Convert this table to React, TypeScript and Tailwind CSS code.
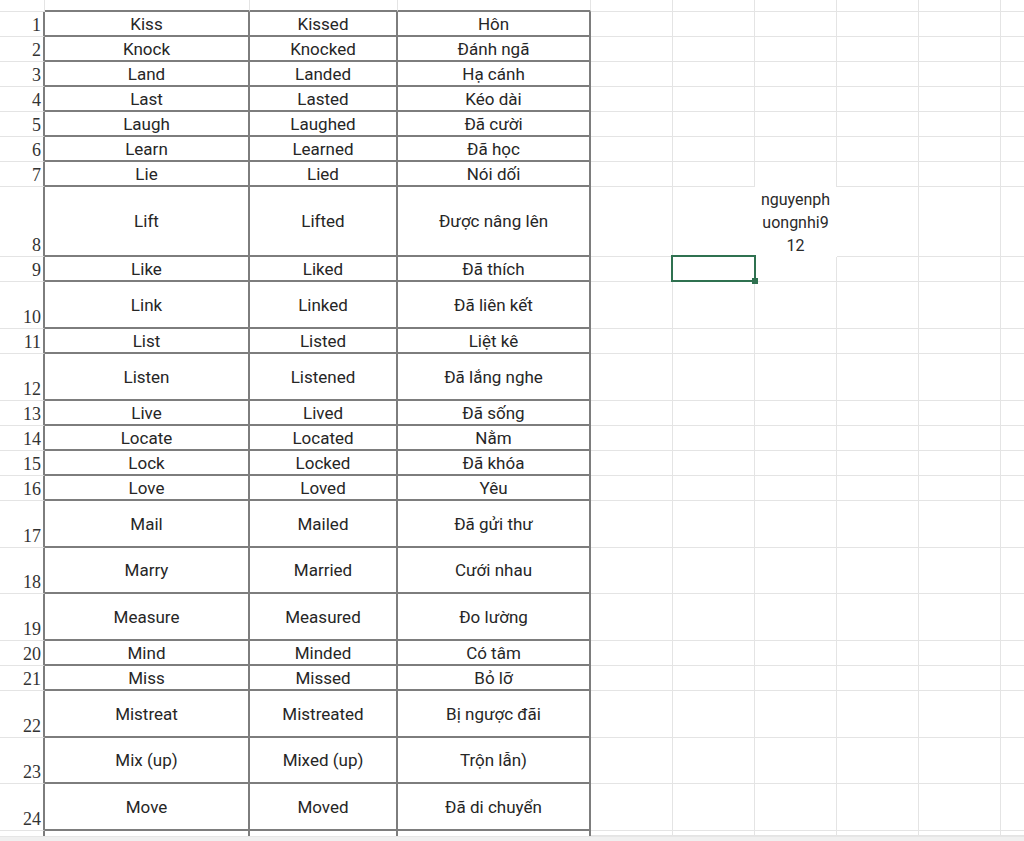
import React from "react";

type Row = { n: number; a: string; b: string; c: string; h: number };

const rows: Row[] = [
  { n: 1, a: "Kiss", b: "Kissed", c: "Hôn", h: 25 },
  { n: 2, a: "Knock", b: "Knocked", c: "Đánh ngã", h: 25 },
  { n: 3, a: "Land", b: "Landed", c: "Hạ cánh", h: 25 },
  { n: 4, a: "Last", b: "Lasted", c: "Kéo dài", h: 25 },
  { n: 5, a: "Laugh", b: "Laughed", c: "Đã cười", h: 25 },
  { n: 6, a: "Learn", b: "Learned", c: "Đã học", h: 25 },
  { n: 7, a: "Lie", b: "Lied", c: "Nói dối", h: 25 },
  { n: 8, a: "Lift", b: "Lifted", c: "Được nâng lên", h: 70 },
  { n: 9, a: "Like", b: "Liked", c: "Đã thích", h: 25 },
  { n: 10, a: "Link", b: "Linked", c: "Đã liên kết", h: 47 },
  { n: 11, a: "List", b: "Listed", c: "Liệt kê", h: 25 },
  { n: 12, a: "Listen", b: "Listened", c: "Đã lắng nghe", h: 47 },
  { n: 13, a: "Live", b: "Lived", c: "Đã sống", h: 25 },
  { n: 14, a: "Locate", b: "Located", c: "Nằm", h: 25 },
  { n: 15, a: "Lock", b: "Locked", c: "Đã khóa", h: 25 },
  { n: 16, a: "Love", b: "Loved", c: "Yêu", h: 25 },
  { n: 17, a: "Mail", b: "Mailed", c: "Đã gửi thư", h: 47 },
  { n: 18, a: "Marry", b: "Married", c: "Cưới nhau", h: 46 },
  { n: 19, a: "Measure", b: "Measured", c: "Đo lường", h: 47 },
  { n: 20, a: "Mind", b: "Minded", c: "Có tâm", h: 25 },
  { n: 21, a: "Miss", b: "Missed", c: "Bỏ lỡ", h: 25 },
  { n: 22, a: "Mistreat", b: "Mistreated", c: "Bị ngược đãi", h: 47 },
  { n: 23, a: "Mix (up)", b: "Mixed (up)", c: "Trộn lẫn)", h: 46 },
  { n: 24, a: "Move", b: "Moved", c: "Đã di chuyển", h: 47 },
];

const heightClass: Record<number, string> = {
  5: "h-[5px]",
  12: "h-[12px]",
  25: "h-[25px]",
  46: "h-[46px]",
  47: "h-[47px]",
  70: "h-[70px]",
};

const cellFont = { fontFamily: "Roboto, 'Noto Sans', sans-serif" };
const numFont = { fontFamily: "'Liberation Serif', 'Times New Roman', serif" };

function GridCells({ rowIndex }: { rowIndex: number }) {
  // rowIndex: 0 = top partial, 1..24 data rows, 25 bottom partial
  return (
    <>
      {[0, 1, 2, 3, 4, 5].map((i) => {
        const isOverflowCell = rowIndex === 8 && i === 2;
        const noBottom = (rowIndex === 7 && i === 2) || isOverflowCell;
        const noRight = (rowIndex === 8 && i === 1) || isOverflowCell;
        const cls =
          "relative w-[82px] shrink-0 border-[#e4e4e4] bg-white " +
          (noBottom ? "" : "border-b ") +
          (noRight ? "pr-px" : "border-r");
        return (
          <div key={i} className={cls}>
            {isOverflowCell && (
              <div
                className="flex h-full w-full flex-col items-center justify-center text-[16px] leading-[23px] text-[#2a2a2a]"
                style={cellFont}
              >
                <span>nguyenph</span>
                <span>uongnhi9</span>
                <span>12</span>
              </div>
            )}
            {rowIndex === 9 && i === 1 && (
              <div className="absolute -left-[2px] -top-[2px] z-10 h-[27px] w-[85px] border-2 border-[#2f7150]">
                <div className="absolute -bottom-[4px] -right-[4px] h-[6px] w-[6px] bg-[#2f7150]" />
              </div>
            )}
          </div>
        );
      })}
    </>
  );
}

function DataRow({ r }: { r: Row }) {
  return (
    <div className={"flex shrink-0 " + heightClass[r.h]}>
      <div
        className="flex w-[45px] shrink-0 items-end justify-end border-b border-r-2 border-b-[#e4e4e4] border-r-[#7d7d7d] pb-[1px] pr-[2px] text-[18px] leading-[20px] text-[#333333]"
        style={numFont}
      >
        {r.n}
      </div>
      <div
        className="flex w-[205px] shrink-0 items-center justify-center border-b-2 border-r-2 border-[#7d7d7d] pt-[2px] text-[17px] text-[#262626]"
        style={cellFont}
      >
        {r.a}
      </div>
      <div
        className="flex w-[148px] shrink-0 items-center justify-center border-b-2 border-r-2 border-[#7d7d7d] pt-[2px] text-[17px] text-[#262626]"
        style={cellFont}
      >
        {r.b}
      </div>
      <div
        className="flex w-[193px] shrink-0 items-center justify-center border-b-2 border-r-2 border-[#7d7d7d] pt-[2px] text-[17px] text-[#262626]"
        style={cellFont}
      >
        {r.c}
      </div>
      <GridCells rowIndex={r.n} />
    </div>
  );
}

export default function App() {
  return (
    <div className="flex h-[841px] w-[1024px] flex-col overflow-hidden bg-white">
      {/* top partial row */}
      <div className="flex h-[12px] shrink-0">
        <div className="w-[45px] shrink-0 border-b border-r border-[#e4e4e4]" />
        <div className="w-[205px] shrink-0 border-b-2 border-r border-b-[#7d7d7d] border-r-[#e4e4e4]" />
        <div className="w-[148px] shrink-0 border-b-2 border-r border-b-[#7d7d7d] border-r-[#e4e4e4]" />
        <div className="w-[193px] shrink-0 border-b-2 border-r border-b-[#7d7d7d] border-r-[#e4e4e4]" />
        <GridCells rowIndex={0} />
      </div>
      {rows.map((r) => (
        <DataRow key={r.n} r={r} />
      ))}
      {/* bottom partial row */}
      <div className="flex h-[5px] shrink-0">
        <div className="w-[45px] shrink-0 border-r-2 border-[#7d7d7d]" />
        <div className="w-[205px] shrink-0 border-r-2 border-[#7d7d7d]" />
        <div className="w-[148px] shrink-0 border-r-2 border-[#7d7d7d]" />
        <div className="w-[193px] shrink-0 border-r-2 border-[#7d7d7d]" />
        <GridCells rowIndex={25} />
      </div>
      <div className="h-[5px] shrink-0 border-t border-[#e6e6e6] bg-[#f0f0f0]" />
    </div>
  );
}
